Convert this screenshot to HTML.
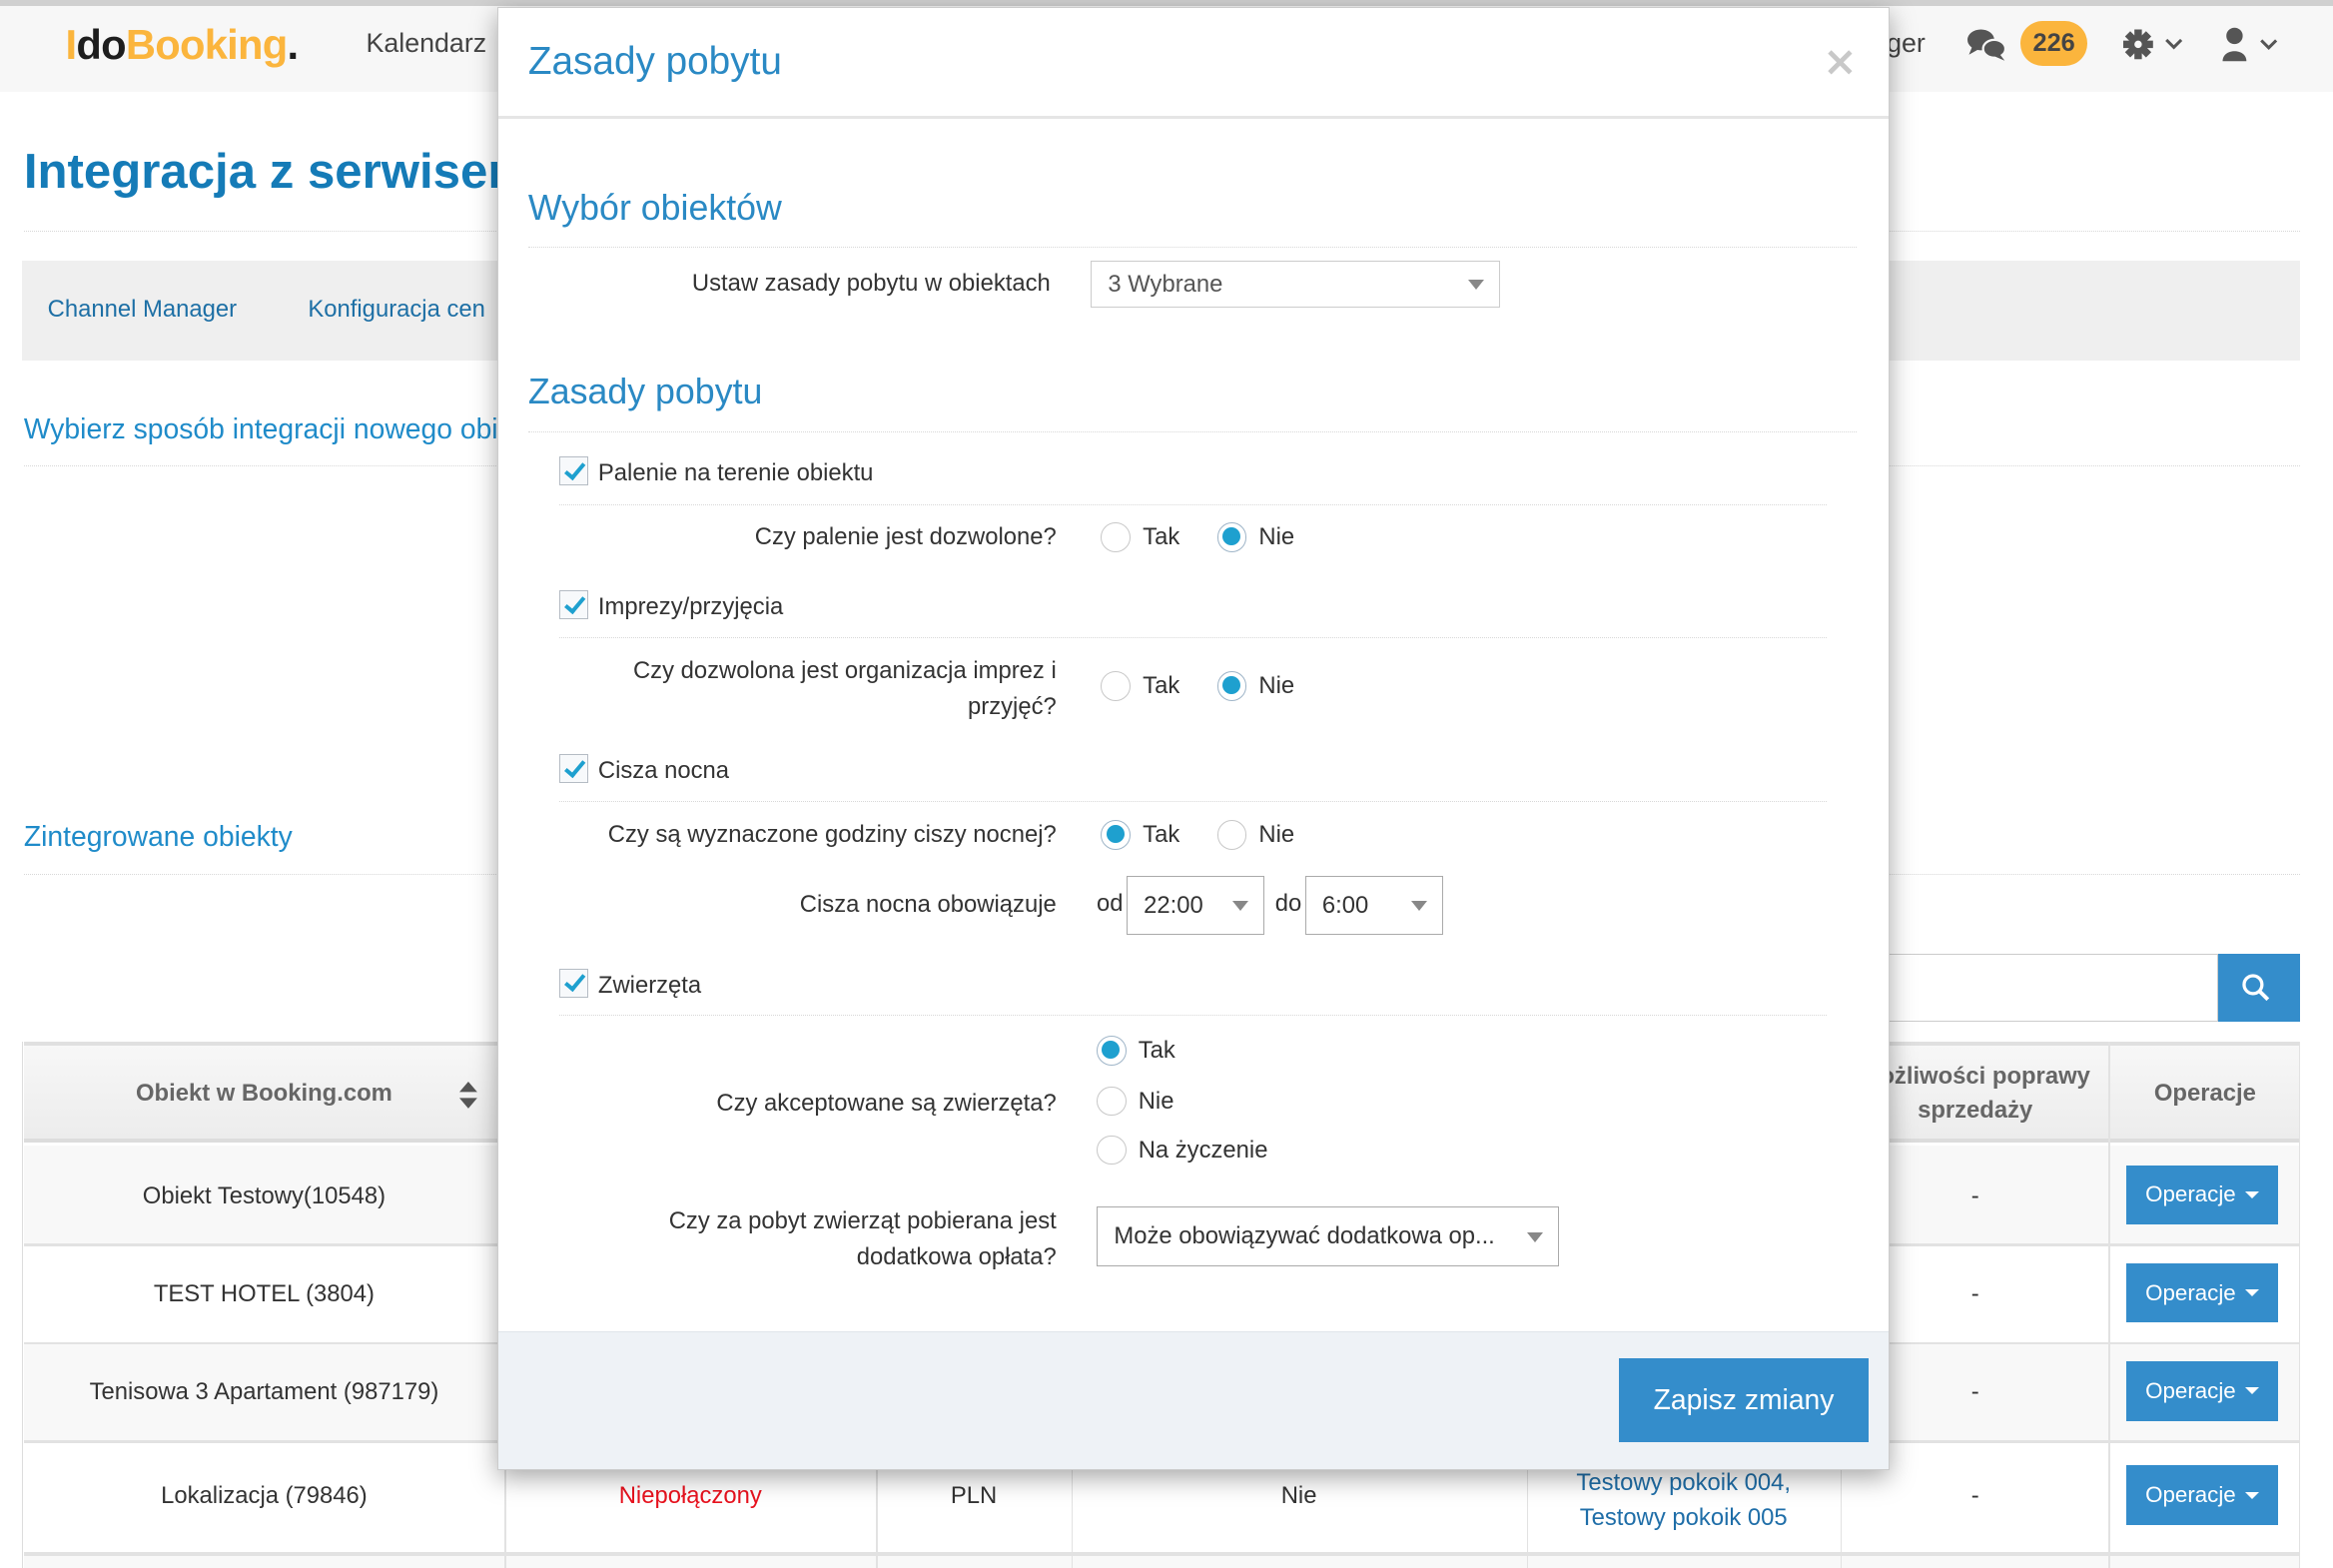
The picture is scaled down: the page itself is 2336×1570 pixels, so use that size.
<!DOCTYPE html>
<html><head><meta charset="utf-8">
<style>
html,body{margin:0;padding:0;}
body{width:2336px;height:1570px;overflow:hidden;background:#fff;}
#w{zoom:1.4898;width:1568px;height:1054px;position:relative;overflow:hidden;font-family:"Liberation Sans","DejaVu Sans",sans-serif;color:#333;font-size:16px;}
.a{position:absolute;white-space:nowrap;}
.dl{position:absolute;height:0;border-top:1px dotted #d8d8d8;}
.cell{position:absolute;display:flex;align-items:center;justify-content:center;text-align:center;}
.btn{position:absolute;left:1429px;width:102px;height:40px;background:#348dcb;color:#fff;font-size:15px;display:flex;align-items:center;justify-content:center;}
.btn:after{content:"";border-left:5px solid transparent;border-right:5px solid transparent;border-top:5px solid #fff;margin-left:6px;}
.cb{position:absolute;width:18px;height:18px;border:1px solid #b5bcc4;background:#f7f9fb;}
.cb:after{content:"";position:absolute;left:6px;top:1px;width:5px;height:11px;border:solid #1ea0cf;border-width:0 3px 3px 0;transform:rotate(40deg);}
.rd{position:absolute;width:20px;height:20px;border:1px solid #c8c8c8;border-radius:50%;background:#fff;box-sizing:border-box;}
.rd.on{border:1px solid #9fb5c8;}
.rd.on:after{content:"";position:absolute;left:3px;top:3px;width:12px;height:12px;border-radius:50%;background:#1ea0cf;}
.sel{position:absolute;border:1px solid #aaa;background:#fff;box-sizing:border-box;display:flex;align-items:center;padding-left:11px;font-size:16px;}
.sel:after{content:"";position:absolute;right:10px;top:50%;margin-top:-3px;border-left:6px solid transparent;border-right:6px solid transparent;border-top:7px solid #888;}
.lab{position:absolute;text-align:right;right:858px;font-size:16px;}
</style></head><body><div id="w">
<div class="a" style="left:0;top:0;width:1568px;height:4px;background:#d0d0d0"></div>
<div class="a" style="left:0;top:4px;width:1568px;height:58px;background:#f7f7f7"></div>
<div class="a" style="left:44px;top:14px;font-size:28px;font-weight:bold;letter-spacing:-0.5px;color:#fbb53d">I<span style="color:#1e1e1e">do</span>Booking<span style="color:#1e1e1e">.</span></div>
<div class="a" style="left:246px;top:19px;font-size:18px;color:#444">Kalendarz</div>
<div class="a" style="left:1268px;top:19px;font-size:18px;color:#444">ger</div>
<svg class="a" style="left:1322px;top:19px" width="26" height="22" viewBox="0 0 26 22"><ellipse cx="9" cy="8" rx="9" ry="7" fill="#555"/><path d="M3 13 L1 18 L8 14Z" fill="#555"/><ellipse cx="18" cy="14" rx="7.5" ry="6" fill="#555" stroke="#f7f7f7" stroke-width="1.5"/><path d="M22 18 L25 22 L18 19Z" fill="#555"/></svg>
<div class="a" style="left:1358px;top:14px;width:45px;height:30px;border-radius:15px;background:#fbb53d;color:#444;font-weight:bold;font-size:17px;text-align:center;line-height:30px">226</div>
<svg class="a" style="left:1427px;top:19px" width="48" height="22" viewBox="0 0 48 22"><g fill="#555" transform="translate(10,11)"><circle r="6.5"/><g><rect x="-2.5" y="-10" width="5" height="20"/><rect x="-2.5" y="-10" width="5" height="20" transform="rotate(45)"/><rect x="-2.5" y="-10" width="5" height="20" transform="rotate(90)"/><rect x="-2.5" y="-10" width="5" height="20" transform="rotate(135)"/></g><circle r="2.5" fill="#f7f7f7"/></g><path d="M29 8 L34 13 L39 8" stroke="#555" stroke-width="2" fill="none"/></svg>
<svg class="a" style="left:1493px;top:18px" width="42" height="24" viewBox="0 0 42 24"><circle cx="9" cy="6" r="5.5" fill="#555"/><path d="M1 23 C1 14 17 14 17 23Z" fill="#555"/><path d="M27 9 L32 14 L37 9" stroke="#555" stroke-width="2" fill="none"/></svg>

<div class="a" style="left:16px;top:96px;font-size:33px;font-weight:bold;color:#157bb7">Integracja z serwisem</div>
<div class="dl" style="left:16px;top:155px;width:1530px"></div>
<div class="a" style="left:15px;top:175px;width:1531px;height:67px;background:#efefef"></div>
<div class="a" style="left:32px;top:199px;font-size:16px;color:#1d6fa5">Channel Manager</div>
<div class="a" style="left:207px;top:199px;font-size:16px;color:#1d6fa5">Konfiguracja cen</div>
<div class="a" style="left:16px;top:277px;font-size:19px;color:#1f8bc9">Wybierz sposób integracji nowego obiektu</div>
<div class="dl" style="left:16px;top:313px;width:1530px"></div>
<div class="a" style="left:16px;top:551px;font-size:19px;color:#1f8bc9">Zintegrowane obiekty</div>
<div class="dl" style="left:16px;top:587px;width:1530px"></div>
<div class="a" style="left:1260px;top:641px;width:230px;height:44px;border:1px solid #ccc;border-left:none;background:#fff"></div>
<div class="a" style="left:1491px;top:641px;width:55px;height:46px;background:#348dcb"></div>
<svg class="a" style="left:1506px;top:654px" width="20" height="20" viewBox="0 0 20 20"><circle cx="8" cy="8" r="6" stroke="#fff" stroke-width="2.2" fill="none"/><path d="M12.5 12.5 L18 18" stroke="#fff" stroke-width="2.6"/></svg>

<div class="a" style="left:15px;top:700px;width:1531px;height:354px;border-left:1px solid #ddd;background:#fff"></div>
<div class="a" style="left:16px;top:700px;width:1530px;height:68px;background:linear-gradient(#f7f7f7,#ececec);border-top:3px solid #e0e0e0;border-bottom:3px solid #dcdcdc;box-sizing:border-box"></div>
<div class="a" style="left:16px;top:770px;width:1530px;height:66px;background:#f8f8f8"></div>
<div class="a" style="left:16px;top:836px;width:1530px;height:2px;background:#e2e2e2"></div>
<div class="a" style="left:16px;top:902px;width:1530px;height:66px;background:#f8f8f8;border-top:2px solid #e2e2e2;box-sizing:border-box"></div>
<div class="a" style="left:16px;top:968px;width:1530px;height:2px;background:#e2e2e2"></div>
<div class="a" style="left:16px;top:1043px;width:1530px;height:11px;background:#f8f8f8;border-top:3px solid #e2e2e2;box-sizing:border-box"></div>
<div class="a" style="left:339px;top:968px;width:1px;height:86px;background:#e2e2e2"></div>
<div class="a" style="left:589px;top:968px;width:1px;height:86px;background:#e2e2e2"></div>
<div class="a" style="left:720px;top:968px;width:1px;height:86px;background:#e2e2e2"></div>
<div class="a" style="left:1026px;top:968px;width:1px;height:86px;background:#e2e2e2"></div>
<div class="a" style="left:1237px;top:700px;width:1px;height:354px;background:#e2e2e2"></div>
<div class="a" style="left:1417px;top:700px;width:1px;height:354px;background:#e2e2e2"></div>
<div class="a" style="left:1545px;top:700px;width:1px;height:354px;background:#e2e2e2"></div>
<div class="cell" style="left:16px;top:700px;width:323px;height:70px;font-weight:bold;color:#666;font-size:16px">Obiekt w Booking.com</div>
<svg class="a" style="left:309px;top:727px" width="12" height="18" viewBox="0 0 12 18"><path d="M6 0 L12 7 H0Z M6 18 L12 11 H0Z" fill="#555"/></svg>
<div class="cell" style="left:1238px;top:700px;width:179px;height:70px;font-weight:bold;color:#666;font-size:16px;line-height:23px">Możliwości poprawy<br>sprzedaży</div>
<div class="cell" style="left:1418px;top:700px;width:128px;height:70px;font-weight:bold;color:#666;font-size:16px">Operacje</div>
<div class="cell" style="left:16px;top:770px;width:323px;height:68px">Obiekt Testowy(10548)</div>
<div class="cell" style="left:16px;top:836px;width:323px;height:68px">TEST HOTEL (3804)</div>
<div class="cell" style="left:16px;top:902px;width:323px;height:68px">Tenisowa 3 Apartament (987179)</div>
<div class="cell" style="left:16px;top:968px;width:323px;height:75px">Lokalizacja (79846)</div>
<div class="cell" style="left:339px;top:968px;width:250px;height:75px;color:#e8121e">Niepołączony</div>
<div class="cell" style="left:589px;top:968px;width:131px;height:75px">PLN</div>
<div class="cell" style="left:720px;top:968px;width:306px;height:75px">Nie</div>
<div class="cell" style="left:1026px;top:968px;width:211px;height:75px;color:#1f6ea8;line-height:24px;padding-top:3px">Testowy pokoik 004,<br>Testowy pokoik 005</div>
<div class="cell" style="left:1238px;top:770px;width:179px;height:68px">-</div>
<div class="cell" style="left:1238px;top:836px;width:179px;height:68px">-</div>
<div class="cell" style="left:1238px;top:902px;width:179px;height:68px">-</div>
<div class="cell" style="left:1238px;top:968px;width:179px;height:75px">-</div>
<div class="btn" style="top:783px">Operacje</div>
<div class="btn" style="top:849px">Operacje</div>
<div class="btn" style="top:915px">Operacje</div>
<div class="btn" style="top:985px">Operacje</div>

<div class="a" style="left:334px;top:5px;width:936px;height:983px;background:#fff;border:1px solid #ccc;box-sizing:border-box;box-shadow:0 5px 16px rgba(0,0,0,0.35)"></div>
<div class="a" style="left:335px;top:78px;width:934px;height:2px;background:#e5e5e5"></div>
<div class="a" style="left:355px;top:27px;font-size:26px;color:#2a89c4">Zasady pobytu</div>
<svg class="a" style="left:1228px;top:33px" width="18" height="18" viewBox="0 0 18 18"><path d="M2 2 L16 16 M16 2 L2 16" stroke="#c8c8c8" stroke-width="3.2"/></svg>

<div class="a" style="left:355px;top:126px;font-size:24px;color:#2a89c4">Wybór obiektów</div>
<div class="dl" style="left:355px;top:166px;width:893px"></div>
<div class="lab" style="top:181px;right:862px">Ustaw zasady pobytu w obiektach</div>
<div class="sel" style="left:733px;top:175px;width:275px;height:32px;color:#555;border-color:#ccc">3 Wybrane</div>

<div class="a" style="left:355px;top:250px;font-size:24px;color:#2a89c4">Zasady pobytu</div>
<div class="dl" style="left:355px;top:290px;width:893px"></div>

<div class="cb" style="left:376px;top:307px"></div>
<div class="a" style="left:402px;top:309px">Palenie na terenie obiektu</div>
<div class="dl" style="left:376px;top:339px;width:852px"></div>
<div class="lab" style="top:352px">Czy palenie jest dozwolone?</div>
<div class="rd" style="left:740px;top:351px"></div><div class="a" style="left:768px;top:352px">Tak</div>
<div class="rd on" style="left:818px;top:351px"></div><div class="a" style="left:846px;top:352px">Nie</div>

<div class="cb" style="left:376px;top:397px"></div>
<div class="a" style="left:402px;top:399px">Imprezy/przyjęcia</div>
<div class="dl" style="left:376px;top:428px;width:852px"></div>
<div class="lab" style="top:439px;line-height:24px">Czy dozwolona jest organizacja imprez i<br>przyjęć?</div>
<div class="rd" style="left:740px;top:451px"></div><div class="a" style="left:768px;top:452px">Tak</div>
<div class="rd on" style="left:818px;top:451px"></div><div class="a" style="left:846px;top:452px">Nie</div>

<div class="cb" style="left:376px;top:507px"></div>
<div class="a" style="left:402px;top:509px">Cisza nocna</div>
<div class="dl" style="left:376px;top:538px;width:852px"></div>
<div class="lab" style="top:552px">Czy są wyznaczone godziny ciszy nocnej?</div>
<div class="rd on" style="left:740px;top:551px"></div><div class="a" style="left:768px;top:552px">Tak</div>
<div class="rd" style="left:818px;top:551px"></div><div class="a" style="left:846px;top:552px">Nie</div>
<div class="lab" style="top:599px">Cisza nocna obowiązuje</div>
<div class="a" style="left:737px;top:598px">od</div>
<div class="sel" style="left:757px;top:589px;width:93px;height:39px">22:00</div>
<div class="a" style="left:857px;top:598px">do</div>
<div class="sel" style="left:877px;top:589px;width:93px;height:39px">6:00</div>

<div class="cb" style="left:376px;top:651px"></div>
<div class="a" style="left:402px;top:653px">Zwierzęta</div>
<div class="dl" style="left:376px;top:682px;width:852px"></div>
<div class="rd on" style="left:737px;top:696px"></div><div class="a" style="left:765px;top:697px">Tak</div>
<div class="rd" style="left:737px;top:730px"></div><div class="a" style="left:765px;top:731px">Nie</div>
<div class="rd" style="left:737px;top:763px"></div><div class="a" style="left:765px;top:764px">Na życzenie</div>
<div class="lab" style="top:732px">Czy akceptowane są zwierzęta?</div>
<div class="lab" style="top:809px;line-height:24px">Czy za pobyt zwierząt pobierana jest<br>dodatkowa opłata?</div>
<div class="sel" style="left:737px;top:811px;width:311px;height:40px">Może obowiązywać dodatkowa op...</div>

<div class="a" style="left:335px;top:895px;width:934px;height:92px;background:#eef2f6;border-top:1px solid #e0e5ea"></div>
<div class="a" style="left:1088px;top:913px;width:168px;height:56px;background:#348dcb;color:#fff;font-size:19px;display:flex;align-items:center;justify-content:center">Zapisz zmiany</div>
</div></body></html>
